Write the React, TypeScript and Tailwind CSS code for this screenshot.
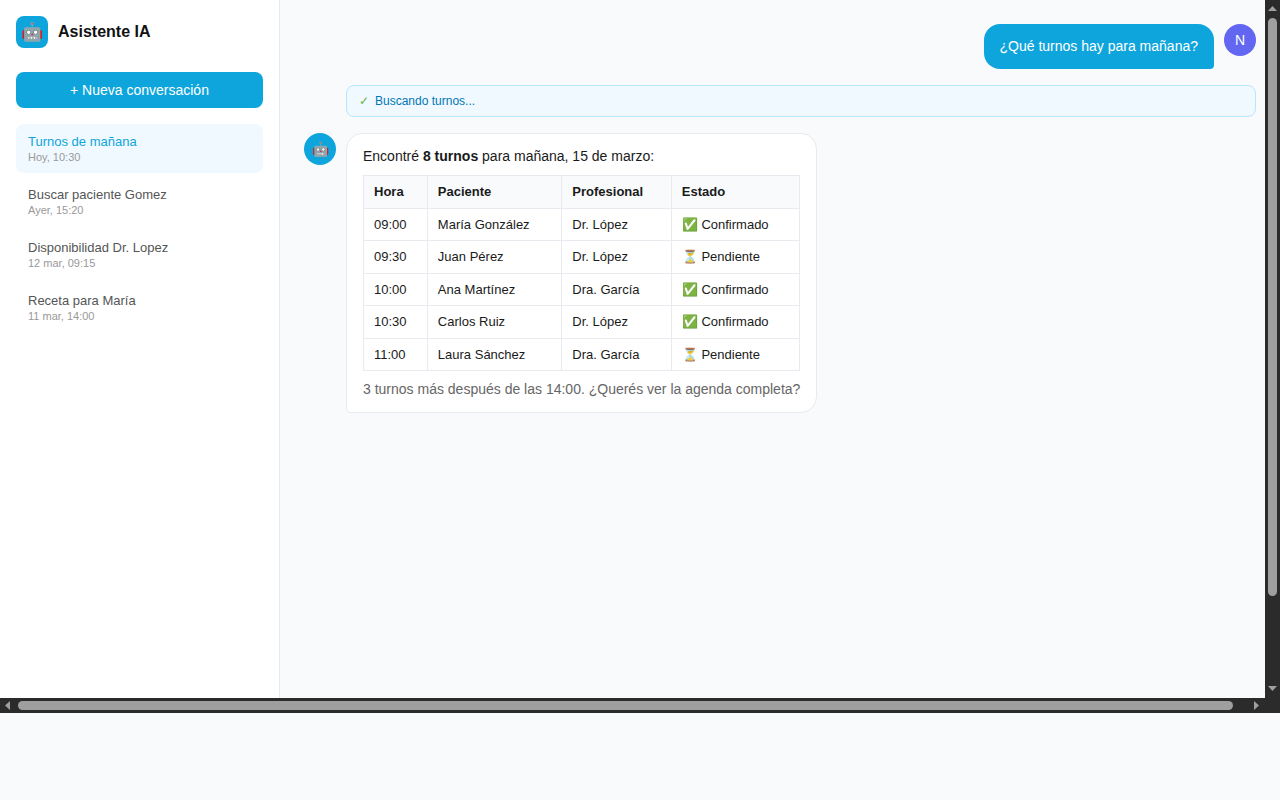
const conversations = [
  { title: 'Turnos de mañana', date: 'Hoy, 10:30', active: true },
  { title: 'Buscar paciente Gomez', date: 'Ayer, 15:20', active: false },
  { title: 'Disponibilidad Dr. Lopez', date: '12 mar, 09:15', active: false },
  { title: 'Receta para María', date: '11 mar, 14:00', active: false },
]

const turnos = [
  { hora: '09:00', paciente: 'María González', profesional: 'Dr. López', estado: '✅ Confirmado' },
  { hora: '09:30', paciente: 'Juan Pérez', profesional: 'Dr. López', estado: '⏳ Pendiente' },
  { hora: '10:00', paciente: 'Ana Martínez', profesional: 'Dra. García', estado: '✅ Confirmado' },
  { hora: '10:30', paciente: 'Carlos Ruiz', profesional: 'Dr. López', estado: '✅ Confirmado' },
  { hora: '11:00', paciente: 'Laura Sánchez', profesional: 'Dra. García', estado: '⏳ Pendiente' },
]

const headers = ['Hora', 'Paciente', 'Profesional', 'Estado']

function Arrow({ points }: { points: string }) {
  return (
    <svg width="9" height="9" viewBox="0 0 9 9" className="shrink-0 fill-[#9f9f9f]">
      <polygon points={points} />
    </svg>
  )
}

export default function App() {
  return (
    <div className="min-h-[800px] bg-[#f8fafc] font-['Liberation_Sans',sans-serif] [text-rendering:optimizeLegibility]">
      <div className="flex h-[713px] w-[1280px] flex-col bg-[#2b2b2b]">
        <div className="flex h-[698px]">
          {/* page inside the scrolled frame is 1280x800 */}
          <div className="w-[1265px] overflow-hidden">
            <div className="flex h-[800px] w-[1280px] bg-[#f8fafc]">
              <aside className="flex w-[280px] shrink-0 flex-col border-r border-[#e8eaf0] bg-white p-4">
                <div className="flex items-center gap-2.5">
                  <div className="flex h-8 w-8 items-center justify-center rounded-lg bg-[#0ea5dc] text-[18px]">🤖</div>
                  <span className="text-base font-semibold text-[#111]">Asistente IA</span>
                </div>
                <button type="button" className="mt-6 h-9 rounded-lg bg-[#0ea5dc] text-sm text-white">
                  + Nueva conversación
                </button>
                <div className="mt-4 flex flex-col gap-1">
                  {conversations.map((c) => (
                    <div
                      key={c.title}
                      className={`h-[49px] rounded-lg px-3 py-2.5 ${c.active ? 'bg-[#f0f9ff]' : ''}`}
                    >
                      <div className={`text-[13px] leading-[15px] ${c.active ? 'text-[#0ea5dc]' : 'text-[#555]'}`}>
                        {c.title}
                      </div>
                      <div className="mt-0.5 text-[11px] leading-[13px] text-[#999]">{c.date}</div>
                    </div>
                  ))}
                </div>
              </aside>

              <main className="flex flex-1 flex-col gap-4 p-6">
                <div className="flex justify-end gap-2.5">
                  <div className="rounded-2xl rounded-br-[4px] bg-[#0ea5dc] px-4 py-3 text-sm leading-[21px] text-white">
                    ¿Qué turnos hay para mañana?
                  </div>
                  <div className="flex h-8 w-8 items-center justify-center rounded-full bg-[#6366f1] text-sm text-white">N</div>
                </div>

                <div className="ml-[42px] flex h-8 items-center gap-1.5 rounded-lg border border-[#bae6fd] bg-[#f0f9ff] px-3 text-xs text-[#0277b5]">
                  <span className="text-[#6cb33f]">✓</span>
                  <span>Buscando turnos...</span>
                </div>

                <div className="flex gap-2.5">
                  <div className="flex h-8 w-8 shrink-0 items-center justify-center rounded-full bg-[#0ea5dc] text-sm">🤖</div>
                  <div className="rounded-2xl rounded-bl-[4px] border border-[#e8eaf0] bg-white px-4 py-3 text-sm leading-[21px] text-[#1a1a1a]">
                    <p>
                      Encontré <strong>8 turnos</strong> para mañana, 15 de marzo:
                    </p>
                    <table className="my-2 w-full border-collapse text-[13px] leading-[15.5px]">
                      <thead>
                        <tr>
                          {headers.map((h) => (
                            <th key={h} className="border border-[#e8eaf0] bg-[#f8fafc] px-2.5 py-2 text-left font-semibold">
                              {h}
                            </th>
                          ))}
                        </tr>
                      </thead>
                      <tbody>
                        {turnos.map((t) => (
                          <tr key={t.hora}>
                            <td className="border border-[#e8eaf0] px-2.5 py-2">{t.hora}</td>
                            <td className="border border-[#e8eaf0] px-2.5 py-2">{t.paciente}</td>
                            <td className="border border-[#e8eaf0] px-2.5 py-2">{t.profesional}</td>
                            <td className="border border-[#e8eaf0] px-2.5 py-2">{t.estado}</td>
                          </tr>
                        ))}
                      </tbody>
                    </table>
                    <p className="text-[#666]">3 turnos más después de las 14:00. ¿Querés ver la agenda completa?</p>
                  </div>
                </div>
              </main>
            </div>
          </div>

          {/* vertical scrollbar */}
          <div className="flex w-[15px] flex-col items-center">
            <div className="flex h-[18px] items-start pt-1.5">
              <Arrow points="4.5,0 9,5 0,5" />
            </div>
            <div className="h-[578px] w-[9px] rounded-full bg-[#9f9f9f]" />
            <div className="flex flex-1 items-end pb-[7px]">
              <Arrow points="0,4 9,4 4.5,9" />
            </div>
          </div>
        </div>

        {/* horizontal scrollbar */}
        <div className="flex h-[15px] items-center">
          <div className="flex w-[18px] pl-[3px]">
            <Arrow points="7,0 7,9 2,4.5" />
          </div>
          <div className="h-[9px] w-[1215px] rounded-full bg-[#9f9f9f]" />
          <div className="ml-[19px]">
            <Arrow points="2,0 7,4.5 2,9" />
          </div>
        </div>
      </div>
    </div>
  )
}
